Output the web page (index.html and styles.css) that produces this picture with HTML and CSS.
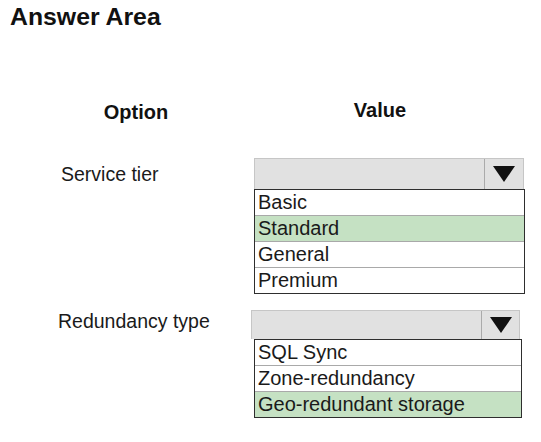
FILE: index.html
```html
<!DOCTYPE html>
<html lang="en">
<head>
<meta charset="utf-8">
<title>Answer Area</title>
<link rel="stylesheet" href="styles.css">
</head>
<body>
<h1 class="title">Answer Area</h1>

<div class="heads">
  <div class="head head-option">Option</div>
  <div class="head head-value">Value</div>
</div>

<div class="row row-tier">
  <div class="label label-tier">Service tier</div>
  <div class="select select-tier">
    <div class="select-box">
      <div class="select-field"></div>
      <div class="select-btn"><span class="arrow"></span></div>
    </div>
    <ul class="options">
      <li class="opt">Basic</li>
      <li class="opt opt-on">Standard</li>
      <li class="opt">General</li>
      <li class="opt">Premium</li>
    </ul>
  </div>
</div>

<div class="row row-redundancy">
  <div class="label label-redundancy">Redundancy type</div>
  <div class="select select-redundancy">
    <div class="select-box">
      <div class="select-field"></div>
      <div class="select-btn"><span class="arrow"></span></div>
    </div>
    <ul class="options">
      <li class="opt">SQL Sync</li>
      <li class="opt">Zone-redundancy</li>
      <li class="opt opt-on">Geo-redundant storage</li>
    </ul>
  </div>
</div>
</body>
</html>
```

FILE: styles.css
```css
html, body {
  margin: 0;
  padding: 0;
  background: #ffffff;
}

body {
  font-family: "Liberation Sans", Arial, sans-serif;
  color: #1a1a1a;
  width: 541px;
  height: 442px;
  overflow: hidden;
}

.title {
  margin: 0;
  padding: 3px 0 0 10px;
  font-size: 24.8px;
  line-height: 28px;
  font-weight: 700;
  color: #111;
}

/* column headings */
.heads {
  display: flex;
  margin-top: 67px;
}

.head {
  font-size: 20px;
  line-height: 24px;
  font-weight: 700;
  text-align: center;
  color: #111;
}

.head-option {
  width: 272px;
  padding-top: 2px;
}

.head-value {
  width: 216px;
}

/* option rows */
.row {
  display: grid;
  grid-template-columns: 254px auto;
  align-items: start;
}

.row-tier {
  margin-top: 34px;
}

.row-redundancy {
  margin-top: 16px;
}

.label {
  font-size: 19.5px;
  line-height: 22px;
}

.label-tier {
  padding: 5px 0 0 61px;
}

.label-redundancy {
  padding: 0 0 0 58px;
}

/* dropdown */
.select-box {
  display: flex;
  background: #e1e1e1;
  border: 1px solid #c6c6c6;
  border-bottom: none;
  box-sizing: border-box;
}

.select-field {
  flex: 1;
}

.select-btn {
  display: flex;
  align-items: center;
  justify-content: center;
  border-left: 1px solid #aaaaaa;
}

.arrow {
  width: 0;
  height: 0;
  border-left: 11.5px solid transparent;
  border-right: 11.5px solid transparent;
  border-top: 16px solid #111;
}

.options {
  list-style: none;
  margin: 0;
  padding: 0;
  border: 1px solid #2e2e2e;
  background: #fff;
}

.opt {
  height: 25px;
  line-height: 25px;
  font-size: 20px;
  padding-left: 3px;
  white-space: nowrap;
}

.opt + .opt {
  border-top: 1px solid #a9a9a9;
}

.opt-on {
  background: #c5e1c3;
}

.select-tier .select-box {
  width: 270px;
  height: 31px;
}

.select-tier .select-btn {
  width: 38px;
}

.select-tier .options {
  width: 269px;
}

.select-redundancy .select-box {
  width: 269px;
  height: 29px;
  margin-left: -3px;
}

.select-redundancy .select-btn {
  width: 37px;
}

.select-redundancy .options {
  width: 266px;
}
```
